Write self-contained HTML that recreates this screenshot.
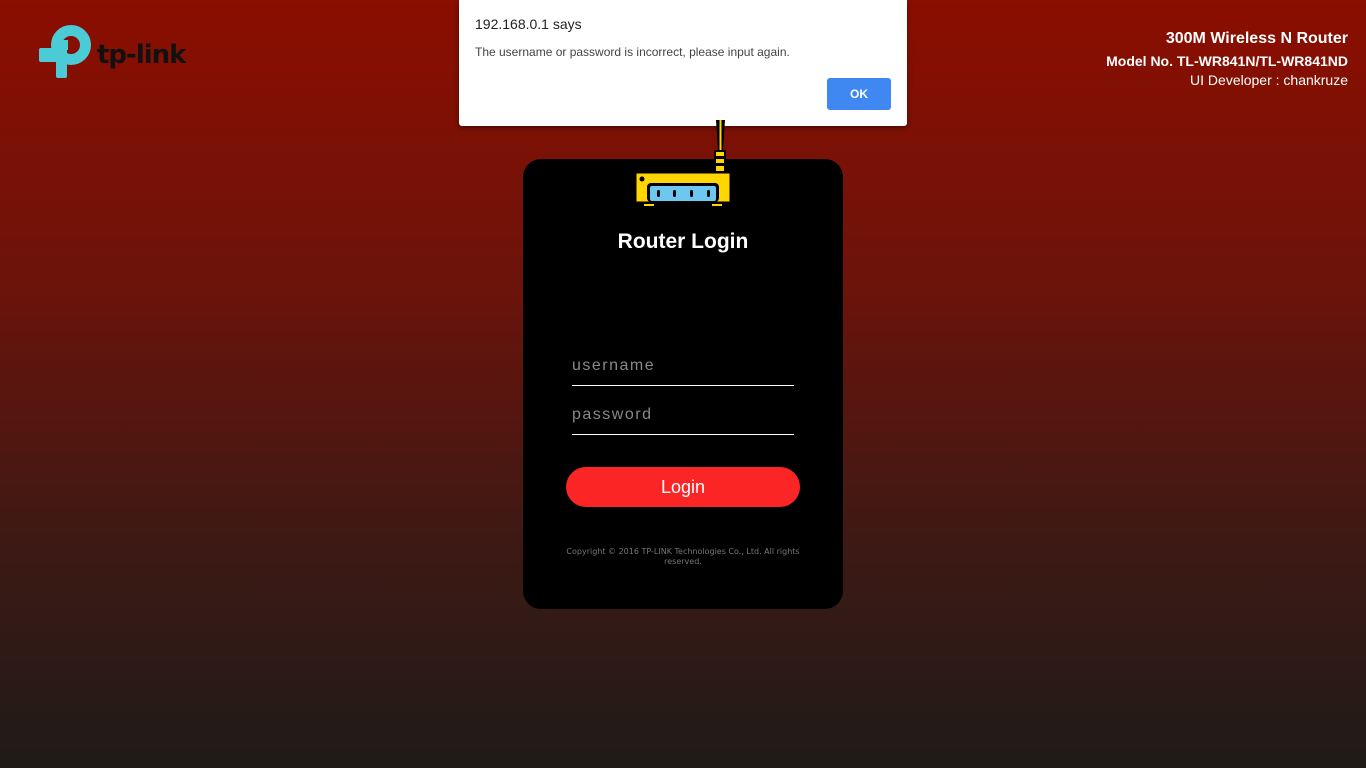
<!DOCTYPE html>
<html><head><meta charset="utf-8"><style>
html,body{margin:0;height:768px;width:1366px;overflow:hidden}
body{background:linear-gradient(#8b0e00 0%,#6e130a 35%,#3e1914 70%,#1f1b18 100%);font-family:"Liberation Sans",sans-serif;position:relative}
.info{position:absolute;right:18px;top:30px;text-align:right;color:#fff}
.card{position:absolute;left:523px;top:159px;width:320px;height:450px;background:#000;border-radius:18px}
.dlg{position:absolute;left:459px;top:0;width:448px;height:126px;background:#fff;border-radius:0 0 3px 3px;box-shadow:0 2px 6px rgba(0,0,0,.4);font-family:"Liberation Sans",sans-serif}
.in{position:absolute;left:49px;width:222px;border-bottom:1px solid #fff;color:#888;font-size:16px;letter-spacing:1.5px;padding-bottom:10px}
</style></head><body>
<svg style="position:absolute;left:0;top:0" width="200" height="90">
<circle cx="71" cy="45" r="14.5" fill="none" stroke="#4acbd6" stroke-width="11"/>
<rect x="56" y="45" width="11" height="33" rx="2" fill="#4acbd6"/>
<rect x="39" y="48" width="28" height="14" rx="2" fill="#4acbd6"/>
<rect x="56" y="40" width="12" height="10" fill="#4acbd6"/>
<text x="97" y="63" font-family="DejaVu Sans" font-weight="bold" font-size="26" fill="#111" letter-spacing="-1">tp-link</text>
</svg>
<div class="info"><div style="font-size:16px;font-weight:bold">300M Wireless N Router</div><div style="font-size:14px;font-weight:bold;margin-top:5px">Model No. TL-WR841N/TL-WR841ND</div><div style="font-size:14px;margin-top:3px">UI Developer : chankruze</div></div>
<div class="card">
<div style="position:absolute;top:71px;width:100%;text-align:center;color:#fff;font-size:21px;font-weight:bold">Router Login</div>
<div class="in" style="top:198px">username</div>
<div class="in" style="top:247px">password</div>
<div style="position:absolute;left:43px;top:308px;width:234px;height:40px;border-radius:20px;background:#fb2525;color:#fff;font-size:18px;text-align:center;line-height:40px">Login</div>
<div style="position:absolute;left:40px;top:388px;width:240px;text-align:center;color:#777;font-size:8px;line-height:10px;font-family:'DejaVu Sans',sans-serif">Copyright © 2016 TP-LINK Technologies Co., Ltd. All rights reserved.</div>
</div>
<svg style="position:absolute;left:630px;top:120px;z-index:2" width="110" height="95">
<polygon points="86,0 95,0 93,30 88,30" fill="#000"/><rect x="89.5" y="0" width="2" height="30" fill="#ffd600"/>
<rect x="84" y="30" width="12" height="22" fill="#000"/>
<rect x="86" y="32" width="8" height="4" fill="#ffd600"/><rect x="86" y="39" width="8" height="4" fill="#ffd600"/><rect x="86" y="46" width="8" height="5" fill="#ffd600"/>
<rect x="6" y="53" width="94" height="29" fill="#ffd600" stroke="#000" stroke-width="1"/>
<circle cx="12" cy="59" r="2.5" fill="#000"/>
<rect x="17" y="63" width="72" height="19" rx="4" fill="#000"/>
<rect x="20" y="66" width="66" height="15" rx="2" fill="#6cc8f0"/>
<rect x="27" y="70" width="3" height="7" rx="1.5" fill="#000"/><rect x="43" y="70" width="3" height="7" rx="1.5" fill="#000"/><rect x="60" y="70" width="3" height="7" rx="1.5" fill="#000"/><rect x="77" y="70" width="3" height="7" rx="1.5" fill="#000"/>
<rect x="14" y="84" width="10" height="2" fill="#ffd600"/><rect x="82" y="84" width="10" height="2" fill="#ffd600"/>
</svg>
<div class="dlg">
<div style="position:absolute;left:16px;top:16px;font-size:14px;color:#222">192.168.0.1 says</div>
<div style="position:absolute;left:16px;top:45px;font-size:12px;color:#444">The username or password is incorrect, please input again.</div>
<div style="position:absolute;left:368px;top:78px;width:64px;height:32px;background:#3f88f2;border-radius:3px;color:#fff;font-size:12px;font-weight:bold;text-align:center;line-height:32px">OK</div>
</div>
</body></html>
